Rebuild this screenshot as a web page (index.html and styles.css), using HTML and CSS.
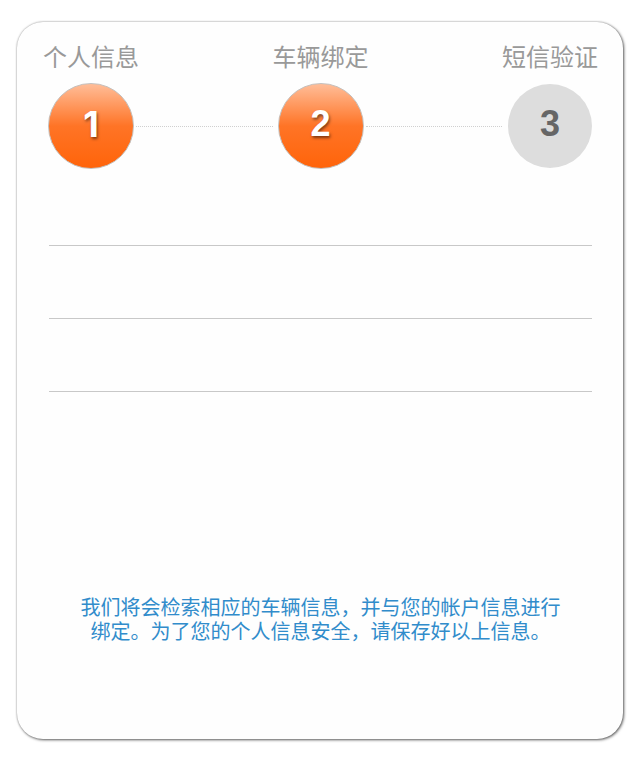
FILE: index.html
```html
<!DOCTYPE html>
<html lang="zh-CN">
<head>
  <meta charset="utf-8">
  <meta name="viewport" content="width=device-width, initial-scale=1">
  <title>车辆绑定</title>
  <link rel="stylesheet" href="styles.css">
</head>
<body>
  <main class="card">
    <ol class="steps">
      <li class="step">
        <span class="step-label">个人信息</span>
        <span class="step-number active plain-one">1</span>
      </li>
      <li class="connector" aria-hidden="true"></li>
      <li class="step">
        <span class="step-label">车辆绑定</span>
        <span class="step-number active">2</span>
      </li>
      <li class="connector" aria-hidden="true"></li>
      <li class="step">
        <span class="step-label">短信验证</span>
        <span class="step-number">3</span>
      </li>
    </ol>
    <div class="rows">
      <div class="row"></div>
      <div class="row"></div>
      <div class="row"></div>
    </div>
    <p class="note">我们将会检索相应的车辆信息，并与您的帐户信息进行绑定。为了您的个人信息安全，请保存好以上信息。</p>
  </main>
</body>
</html>
```
FILE: styles.css
```css
* {
  box-sizing: border-box;
}

body {
  margin: 0;
  padding: 22px 17px 18px;
  background: #fff;
  font-family: "Liberation Sans", "Noto Sans CJK SC", sans-serif;
}

.card {
  padding: 20px 25px 95px 26px;
  border-radius: 26px;
  background: #fefefe;
  box-shadow: 0 0 2px rgba(0, 0, 0, 0.3), 1px 1px 3px rgba(0, 0, 0, 0.6);
}

.steps {
  display: flex;
  align-items: flex-end;
  margin: 0;
  padding: 0;
  list-style: none;
}

.step {
  display: flex;
  flex-direction: column;
  align-items: center;
  gap: 9px;
}

.step-label {
  color: #999;
  font-size: 24px;
  line-height: 32px;
  white-space: nowrap;
}

.step-number {
  display: flex;
  align-items: center;
  justify-content: center;
  width: 86px;
  height: 86px;
  padding-bottom: 4px;
  border: 1px solid transparent;
  border-radius: 50%;
  background: #ddd;
  background-clip: padding-box;
  color: #666;
  font-size: 36px;
  font-weight: 700;
}

.step-number.active {
  border-color: #c4c0bd;
  background: linear-gradient(#ffbd98, #ff7426 50%, #ff640a);
  color: #fff;
  text-shadow: 1px 2px 3px rgba(0, 0, 0, 0.5);
}

/* Inter draws the numeral 1 without a foot serif */
.plain-one {
  font-family: Inter, "Liberation Sans", sans-serif;
}

.connector {
  flex: 1;
  margin: 0 0 42px -3px;
  border-top: 1px dotted #d0d0d0;
}

.rows {
  margin: 4px 6px 0;
}

.row {
  height: 73px;
  border-bottom: 1px solid #c8c8c8;
}

.note {
  max-width: 480px;
  margin: 204px auto 0;
  color: #318ccb;
  font-size: 20px;
  line-height: 24px;
  text-align: center;
}
```
